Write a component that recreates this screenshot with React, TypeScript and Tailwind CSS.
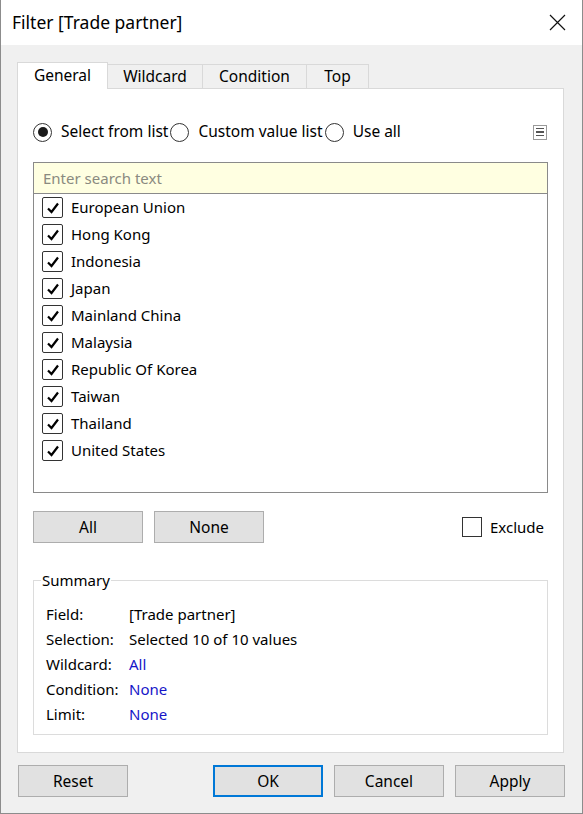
import React from 'react';

const font = { fontFamily: '"Noto Sans", "Liberation Sans", sans-serif' };

const items = [
  'European Union',
  'Hong Kong',
  'Indonesia',
  'Japan',
  'Mainland China',
  'Malaysia',
  'Republic Of Korea',
  'Taiwan',
  'Thailand',
  'United States',
];

function Radio({ checked, label }: { checked?: boolean; label: string }) {
  return (
    <label className="flex items-center">
      <span className="w-[19px] h-[19px] rounded-full border border-[#333] bg-white flex items-center justify-center">
        {checked && <span className="w-[10px] h-[10px] rounded-full bg-[#1a1a1a]" />}
      </span>
      <span className="ml-[9px] mr-[2px]">{label}</span>
    </label>
  );
}

function Check({ checked }: { checked?: boolean }) {
  return (
    <span className="w-[21px] h-[21px] rounded-[2px] border border-[#333] bg-white flex items-center justify-center shrink-0">
      {checked && (
        <svg width="14" height="14" viewBox="0 0 14 14">
          <path d="M2 7.5 L5.5 11 L12 2.5" fill="none" stroke="#000" strokeWidth="2.2" />
        </svg>
      )}
    </span>
  );
}

function Btn({ children, primary }: { children: React.ReactNode; primary?: boolean }) {
  return (
    <button
      className={
        'w-[110px] h-[32px] pt-[2px] bg-[#e1e1e1] text-[15.5px] text-black flex items-center justify-center' +
        (primary ? ' border-2 border-[#0078d7]' : ' border border-[#adadad]')
      }
    >
      {children}
    </button>
  );
}

export default function App() {
  return (
    <div
      style={font}
      className="w-[583px] h-[814px] bg-[#f0f0f0] flex flex-col border-x border-b border-[#8c8c8c] text-black text-[15px]"
    >
      {/* title bar */}
      <div className="h-[45px] bg-white flex items-center justify-between pl-[11px] pr-[16px] shrink-0">
        <span className="text-[17.5px] leading-none">Filter [Trade partner]</span>
        <svg width="17" height="17" viewBox="0 0 17 17">
          <path d="M1 1 L16 16 M16 1 L1 16" stroke="#111" strokeWidth="1.2" />
        </svg>
      </div>

      <div className="pl-[16px] pt-[17px] flex flex-col">
        {/* tabs */}
        <div className="flex items-end h-[26px] relative z-10 text-[15.5px]">
          <div className="w-[91px] h-[27px] bg-white border-x border-t border-[#d9d9d9] flex items-center justify-center pb-[1px] -mb-px">
            General
          </div>
          <div className="w-[95px] h-[24px] pt-[1px] bg-[#f0f0f0] border-t border-r border-[#d9d9d9] flex items-center justify-center">
            Wildcard
          </div>
          <div className="w-[104px] h-[24px] pt-[1px] bg-[#f0f0f0] border-t border-r border-[#d9d9d9] flex items-center justify-center">
            Condition
          </div>
          <div className="w-[62px] h-[24px] pt-[1px] bg-[#f0f0f0] border-t border-r border-[#d9d9d9] flex items-center justify-center">
            Top
          </div>
        </div>

        {/* panel */}
        <div className="w-[547px] h-[665px] bg-white border border-[#d9d9d9] px-[15px] pt-[33px] flex flex-col">
          <div className="flex items-center h-[20px] text-[15.5px]">
            <Radio checked label="Select from list" />
            <Radio label="Custom value list" />
            <Radio label="Use all" />
            <span className="ml-auto mr-[1px] w-[14px] h-[15px] border border-[#9a9a9a] flex flex-col items-center justify-center gap-[2px]">
              <span className="w-[8px] h-[1.5px] bg-[#555]" />
              <span className="w-[8px] h-[1.5px] bg-[#555]" />
              <span className="w-[8px] h-[1.5px] bg-[#555]" />
            </span>
          </div>

          {/* list */}
          <div className="mt-[20px] h-[331px] border border-[#8a8a8a] flex flex-col">
            <div className="h-[31px] bg-[#ffffe1] border-b border-[#8a8a8a] flex items-center pl-[9px] text-[#8a8a80]">
              Enter search text
            </div>
            <div>
              {items.map((it) => (
                <div key={it} className="h-[27px] flex items-center pl-[8px]">
                  <Check checked />
                  <span className="ml-[8px]">{it}</span>
                </div>
              ))}
            </div>
          </div>

          {/* all / none */}
          <div className="mt-[18px] flex items-center">
            <Btn>All</Btn>
            <span className="ml-[11px]">
              <Btn>None</Btn>
            </span>
            <label className="ml-auto mr-[4px] flex items-center">
              <span className="w-[20px] h-[20px] border border-[#333] bg-white" />
              <span className="ml-[8px]">Exclude</span>
            </label>
          </div>

          {/* summary */}
          <fieldset className="mt-[27px] border border-[#dcdcdc] h-[165px] pl-[12px] pt-[12px]">
            <legend className="-ml-[5px] px-[1px] leading-[20px]">Summary</legend>
            <div className="grid grid-cols-[83px_1fr] auto-rows-[25px] items-center">
              <span>Field:</span>
              <span>[Trade partner]</span>
              <span>Selection:</span>
              <span>Selected 10 of 10 values</span>
              <span>Wildcard:</span>
              <span className="text-[#1515c8]">All</span>
              <span>Condition:</span>
              <span className="text-[#1515c8]">None</span>
              <span>Limit:</span>
              <span className="text-[#1515c8]">None</span>
            </div>
          </fieldset>
        </div>

        {/* footer */}
        <div className="mt-[12px] flex items-center pl-[1px]">
          <Btn>Reset</Btn>
          <span className="ml-[85px]">
            <Btn primary>OK</Btn>
          </span>
          <span className="ml-[11px]">
            <Btn>Cancel</Btn>
          </span>
          <span className="ml-[11px]">
            <Btn>Apply</Btn>
          </span>
        </div>
      </div>
    </div>
  );
}
